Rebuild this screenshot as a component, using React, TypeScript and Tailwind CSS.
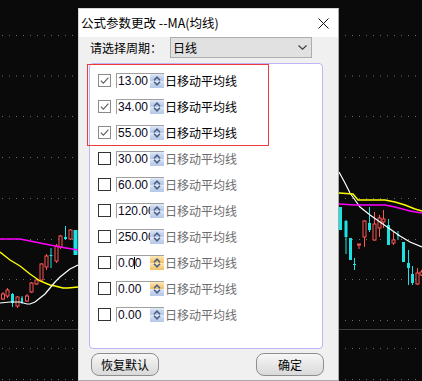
import React from "react";

type Candle = { x: number; hi: number; lo: number; top: number; bot: number; up: boolean; w?: number };

const RED = "#ff5454";
const CYAN = "#1be3e3";

const candles: Candle[] = [
  { x: 3, hi: 292, lo: 300, top: 294, bot: 299, up: true },
  { x: 7.5, hi: 288, lo: 298, top: 290, bot: 296, up: true },
  { x: 12.5, hi: 293, lo: 307, top: 294, bot: 303, up: false },
  { x: 17.5, hi: 296, lo: 308, top: 297, bot: 306, up: true },
  { x: 22, hi: 296, lo: 304, top: 298, bot: 302, up: false, w: 2 },
  { x: 27, hi: 294, lo: 302, top: 296, bot: 301, up: true },
  { x: 31.5, hi: 282, lo: 293, top: 283, bot: 292, up: true },
  { x: 36.5, hi: 279, lo: 285, top: 280, bot: 284, up: true },
  { x: 41.5, hi: 263, lo: 281, top: 264, bot: 280, up: true },
  { x: 46.5, hi: 254, lo: 270, top: 256, bot: 267, up: true },
  { x: 51, hi: 248, lo: 268, top: 255, bot: 256, up: false },
  { x: 56.5, hi: 244, lo: 263, top: 246, bot: 261, up: true },
  { x: 60.5, hi: 235, lo: 249, top: 236, bot: 247, up: true },
  { x: 65.5, hi: 226, lo: 240, top: 237, bot: 239, up: false },
  { x: 70.5, hi: 229, lo: 240, top: 230, bot: 239, up: true },
  { x: 75.5, hi: 230, lo: 255, top: 230, bot: 255, up: false, w: 4 },
  { x: 340.5, hi: 207, lo: 230, top: 207, bot: 230, up: false },
  { x: 346, hi: 220, lo: 254, top: 221, bot: 237, up: false },
  { x: 350.5, hi: 238, lo: 260, top: 238, bot: 260, up: false },
  { x: 354.5, hi: 258, lo: 270, top: 264, bot: 265, up: false },
  { x: 359, hi: 244, lo: 249, top: 244, bot: 245, up: true },
  { x: 364.5, hi: 220, lo: 247, top: 221, bot: 237, up: true },
  { x: 369.5, hi: 207, lo: 232, top: 223, bot: 230, up: false },
  { x: 374.5, hi: 212, lo: 241, top: 224, bot: 240, up: true },
  { x: 379.5, hi: 215, lo: 237, top: 218, bot: 228, up: true },
  { x: 383.5, hi: 210, lo: 228, top: 219, bot: 222, up: true },
  { x: 388.5, hi: 219, lo: 245, top: 225, bot: 245, up: false },
  { x: 393.5, hi: 232, lo: 245, top: 240, bot: 243, up: true },
  { x: 398, hi: 231, lo: 240, top: 235, bot: 236, up: false, w: 2 },
  { x: 403.5, hi: 242, lo: 262, top: 242, bot: 262, up: false },
  { x: 408.5, hi: 250, lo: 285, top: 263, bot: 268, up: false },
  { x: 412.5, hi: 266, lo: 285, top: 274, bot: 283, up: false },
  { x: 417.5, hi: 268, lo: 285, top: 273, bot: 284, up: true },
  { x: 421.5, hi: 270, lo: 276, top: 272, bot: 275, up: true },
];

const pts = (a: number[][]) => a.map((p) => p.join(",")).join(" ");

function Chart() {
  const dotted = [35, 75.5, 116, 157, 198, 239, 279, 320, 348, 379];
  return (
    <svg className="absolute inset-0" width={422} height={381} viewBox="0 0 422 381">
      <rect width={422} height={381} fill="#0a0a0a" />
      {dotted.map((y) => (
        <line key={y} x1={2} x2={422} y1={y + 0.5} y2={y + 0.5} stroke="#6e6e6e" strokeDasharray="1 6" />
      ))}
      <line x1={0} x2={422} y1={329.5} y2={329.5} stroke="#3c3c3c" />
      {candles.map((c, i) => {
        const w = c.w ?? 3;
        const col = c.up ? RED : CYAN;
        return (
          <g key={i}>
            <line x1={c.x} x2={c.x} y1={c.hi} y2={c.lo} stroke={col} strokeWidth={1} />
            {c.up ? (
              <rect x={c.x - w / 2} y={c.top} width={w} height={Math.max(1, c.bot - c.top)} fill="#0a0a0a" stroke={col} strokeWidth={1} />
            ) : (
              <rect x={c.x - w / 2} y={c.top} width={w} height={Math.max(1, c.bot - c.top)} fill={col} />
            )}
          </g>
        );
      })}
      <polyline fill="none" stroke="#ff00ff" strokeWidth={1.6} points={pts([[0, 239], [20, 239], [30, 241], [45, 244], [60, 247], [78, 250]])} />
      <polyline fill="none" stroke="#ffff00" strokeWidth={1.4} points={pts([[0, 252], [5, 256], [10, 260], [20, 266], [30, 274], [40, 281], [50, 285], [55, 286], [63, 288], [68, 288], [78, 287]])} />
      <polyline fill="none" stroke="#ffffff" strokeWidth={1.2} points={pts([[0, 303], [10, 302], [20, 302], [27, 304], [30, 304], [35, 302], [40, 298], [45, 294], [50, 288], [55, 282], [60, 277], [65, 273], [70, 269], [78, 265]])} />
      <polyline fill="none" stroke="#ffffff" strokeWidth={1.2} points={pts([[339, 172], [345, 183], [350, 193], [355, 200], [360, 207], [370, 215], [380, 222], [390, 229], [400, 236], [410, 242], [422, 247]])} />
      <polyline fill="none" stroke="#ffff00" strokeWidth={1.4} points={pts([[339, 193], [353, 194], [358, 200], [385, 200], [395, 202], [405, 205], [415, 209], [422, 211]])} />
      <polyline fill="none" stroke="#ff00ff" strokeWidth={1.6} points={pts([[339, 204], [355, 205], [385, 205], [395, 207], [410, 211], [422, 213]])} />
    </svg>
  );
}

type Row = { value: string; checked: boolean; spin?: "blue" | "orange" | "half"; cursor?: boolean };

const rows: Row[] = [
  { value: "13.00", checked: true },
  { value: "34.00", checked: true },
  { value: "55.00", checked: true },
  { value: "30.00", checked: false },
  { value: "60.00", checked: false },
  { value: "120.00", checked: false },
  { value: "250.00", checked: false },
  { value: "0.00", checked: false, spin: "orange", cursor: true },
  { value: "0.00", checked: false, spin: "half" },
  { value: "0.00", checked: false },
];

const BLUE_BG = "linear-gradient(to bottom, #e3ebf7, #c3d3ee 50%, #b5c8e9)";
const ORANGE_BG = "linear-gradient(to bottom, #fdebbc, #f6d28a 50%, #efc067)";

function Spinner({ spin }: { spin?: Row["spin"] }) {
  const top = spin === "orange" || spin === "half" ? ORANGE_BG : BLUE_BG;
  const bot = spin === "orange" ? ORANGE_BG : BLUE_BG;
  return (
    <div className="w-[14px] h-full flex flex-col">
      <div className="flex-1 flex items-end justify-center" style={{ background: top }}>
        <svg width="8" height="5" viewBox="0 0 8 5">
          <path d="M1 4.2 L4 1.2 L7 4.2" fill="none" stroke="#4c5f82" strokeWidth="1.6" />
        </svg>
      </div>
      <div className="flex-1 flex items-start justify-center" style={{ background: bot }}>
        <svg width="8" height="5" viewBox="0 0 8 5">
          <path d="M1 0.8 L4 3.8 L7 0.8" fill="none" stroke="#4c5f82" strokeWidth="1.6" />
        </svg>
      </div>
    </div>
  );
}

function Checkbox({ checked }: { checked: boolean }) {
  return (
    <div
      className={
        checked
          ? "w-[13px] h-[13px] bg-white border border-[#8a8a8a] flex items-center justify-center"
          : "w-[13px] h-[13px] bg-white border border-[#333333]"
      }
    >
      {checked && (
        <svg width="11" height="11" viewBox="0 0 11 11">
          <path d="M1.8 5.6 L4.4 8.2 L9.4 2.6" fill="none" stroke="#5e5e5e" strokeWidth="1.1" />
        </svg>
      )}
    </div>
  );
}

export default function App() {
  const cjk = { fontFamily: '"Noto Sans CJK SC", "Noto Sans", sans-serif' };
  return (
    <div className="relative w-[422px] h-[381px] overflow-hidden bg-[#0a0a0a]" style={cjk}>
      <Chart />
      <div className="absolute left-[78px] top-[8px] w-[261px] h-[373px] bg-[#f0f0f0] border border-[#a9a9a9] border-l-[#d6d6d6] border-t-[#d6d6d6] flex flex-col">
        <div className="h-[28px] bg-white flex items-center justify-between pl-[2px] pr-[9px]">
          <span className="text-[12.5px] leading-none text-black">公式参数更改 --MA(均线)</span>
          <svg width="11" height="11" viewBox="0 0 11 11">
            <path d="M0.5 0.5 L10.5 10.5 M10.5 0.5 L0.5 10.5" stroke="#111" strokeWidth="1" />
          </svg>
        </div>
        <div className="flex items-center h-[21px] pl-[11px]">
          <span className="w-[80px] text-[12px] leading-none text-black">请选择周期：</span>
          <div className="w-[142px] h-[21px] bg-[#e1e1e1] border border-[#adadad] flex items-center justify-between pl-[2px] pr-[4px]">
            <span className="text-[12px] leading-none text-black">日线</span>
            <svg width="9" height="5" viewBox="0 0 9 5">
              <path d="M0.5 0.5 L4.5 4.2 L8.5 0.5" fill="none" stroke="#3a3a3a" strokeWidth="1.1" />
            </svg>
          </div>
        </div>
        <div className="ml-[10px] mt-[5px] w-[234px] h-[286px] bg-white border border-[#b9b5f7] rounded-[4px] pl-[8px] pt-[9px] flex flex-col gap-[11px]">
          {rows.map((r, i) => (
            <div key={i} className="h-[15px] flex items-center">
              <Checkbox checked={r.checked} />
              <div className="ml-[5px] h-[15px] flex border-t border-l border-[#a0a0a0]">
                <div
                  className="w-[33px] h-full bg-white overflow-hidden whitespace-nowrap pl-[1px] text-[12px] leading-[14px] text-[#050520] relative"
                  style={{ fontFamily: '"Liberation Sans", Arial, sans-serif' }}
                >
                  {r.value}
                  {r.cursor && <span className="absolute left-[17px] top-[1px] w-[1px] h-[12px] bg-black" />}
                </div>
                <Spinner spin={r.spin} />
              </div>
              <span
                className={
                  r.checked
                    ? "ml-[1px] text-[12px] leading-none text-black"
                    : "ml-[1px] text-[12px] leading-none text-[#6d6d6d]"
                }
              >
                日移动平均线
              </span>
            </div>
          ))}
        </div>
        <div className="mt-[4px] flex justify-between pl-[12px] pr-[14px]">
          <button className="w-[68px] h-[23px] rounded-[8px] border border-[#8e8e8e] bg-gradient-to-b from-[#f7f7f7] to-[#d9d9d9] text-[12px] leading-none text-black">
            恢复默认
          </button>
          <button className="w-[68px] h-[23px] rounded-[8px] border border-[#8e8e8e] bg-gradient-to-b from-[#f7f7f7] to-[#d9d9d9] text-[12px] leading-none text-black">
            确定
          </button>
        </div>
        <div className="absolute left-[8px] top-[55px] w-[182px] h-[82px] border border-[#ee3b3b] pointer-events-none" />
      </div>
    </div>
  );
}
